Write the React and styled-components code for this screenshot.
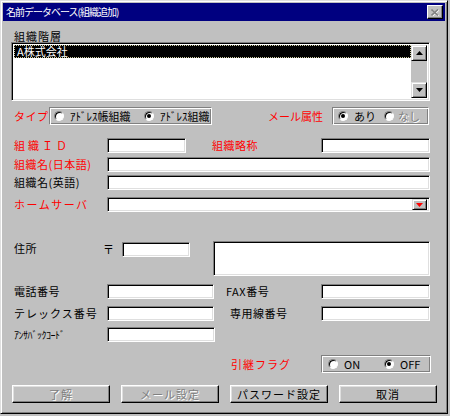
import React from 'react';
import styled, { createGlobalStyle } from 'styled-components';

const Global = createGlobalStyle`
    html, body {
        margin: 0;
        padding: 0;
        background: #c0c0c0;
    }
    body {
        font-family: "Noto Sans CJK JP", "Noto Sans", sans-serif;
        font-size: 11px;
        color: #000;
    }
`
const Window = styled.div`
    box-sizing: border-box;
    width: 448px;
    height: 414px;
    padding: 2px;
    background: #c0c0c0;
    border: 1px solid;
    border-color: #dfdfdf #000 #000 #dfdfdf;
    box-shadow: inset 1px 1px #fff, inset -1px -1px #808080;
    display: flex;
    flex-direction: column;
`
const TitleBar = styled.div`
    height: 18px;
    background: #000080;
    color: #fff;
    display: flex;
    align-items: center;
    padding: 0 2px 0 3px;
    font-size: 10px;
`
const TitleText = styled.span`
    flex: 1;
    line-height: 18px;
    letter-spacing: -1px;
`
const CloseBtn = styled.div`
    box-sizing: border-box;
    width: 16px;
    height: 14px;
    background: #c0c0c0;
    border: 1px solid;
    border-color: #fff #000 #000 #fff;
    box-shadow: inset -1px -1px #808080;
    display: flex;
    align-items: center;
    justify-content: center;
`
const Body = styled.div`
    display: flex;
    flex-direction: column;
    padding: 0 5px 0 8px;
`
const ListLabel = styled.div`
    padding: 10px 0 0 3px;
    height: 11px;
    line-height: 11px;
    letter-spacing: 1px;
`
const ListBox = styled.div`
    box-sizing: border-box;
    width: 419px;
    height: 59px;
    background: #fff;
    border: 1px solid;
    border-color: #808080 #fff #fff #808080;
    box-shadow: inset 1px 1px #000, inset -1px -1px #dfdfdf;
    padding: 2px;
    display: flex;
`
const ListItems = styled.div`
    flex: 1;
`
const ListItem = styled.div`
    box-sizing: border-box;
    height: 13px;
    line-height: 11px;
    background: #000;
    color: #fff;
    border: 1px dotted #c8c8a0;
    padding-left: 2px;
    font-size: 11px;
`
const ScrollBar = styled.div`
    width: 16px;
    display: flex;
    flex-direction: column;
    background: #c0c0c0;
`
const ScrollBtn = styled.div`
    box-sizing: border-box;
    width: 16px;
    height: 16px;
    background: #c0c0c0;
    border: 1px solid;
    border-color: #dfdfdf #000 #000 #dfdfdf;
    box-shadow: inset 1px 1px #fff, inset -1px -1px #808080;
    display: flex;
    align-items: center;
    justify-content: center;
`
const Track = styled.div`
    flex: 1;
    background: #c0c0c0;
`
const Row = styled.div`
    display: flex;
    align-items: ${p => p.$align || 'center'};
    height: ${p => p.$h || 15}px;
    margin-top: ${p => p.$mt || 0}px;
`
const Label = styled.span`
    box-sizing: border-box;
    width: ${p => p.$w}px;
    margin-left: ${p => p.$ml || 0}px;
    padding-left: ${p => p.$pl ?? 3}px;
    color: ${p => (p.$red ? '#ff0000' : '#000')};
    font-size: ${p => p.$fs || 11}px;
    letter-spacing: ${p => p.$ls ?? 0.5}px;
    white-space: nowrap;
    line-height: 15px;
`
const Field = styled.div`
    box-sizing: border-box;
    width: ${p => p.$w}px;
    height: ${p => p.$h || 15}px;
    margin-left: ${p => p.$ml || 0}px;
    margin-top: ${p => p.$mt || 0}px;
    background: #fff;
    border: 1px solid;
    border-color: #808080 #fff #fff #808080;
    box-shadow: inset 1px 1px #000, inset -1px -1px #dfdfdf;
    display: flex;
    justify-content: flex-end;
    align-items: center;
    padding-right: 2px;
`
const DropBtn = styled.div`
    box-sizing: border-box;
    width: 15px;
    height: 11px;
    background: #c0c0c0;
    border: 1px solid;
    border-color: #dfdfdf #000 #000 #dfdfdf;
    box-shadow: inset 1px 1px #fff, inset -1px -1px #808080;
    display: flex;
    align-items: center;
    justify-content: center;
`
const Group = styled.div`
    box-sizing: border-box;
    width: ${p => p.$w}px;
    height: 18px;
    margin-left: ${p => p.$ml || 0}px;
    border: 1px solid;
    border-color: #808080 #fff #fff #808080;
    box-shadow: inset 1px 1px #fff, inset -1px -1px #808080;
    display: flex;
    align-items: center;
    padding-left: ${p => p.$pl || 4}px;
`
const RadioWrap = styled.span`
    display: flex;
    align-items: center;
    width: ${p => (p.$w ? `${p.$w}px` : 'auto')};
    color: ${p => (p.$disabled ? '#808080' : '#000')};
    text-shadow: ${p => (p.$disabled ? '1px 1px #fff' : 'none')};
    font-size: 11px;
    white-space: nowrap;
`
const Circle = styled.span`
    box-sizing: border-box;
    width: 10px;
    height: 10px;
    border-radius: 50%;
    background: #fff;
    border: 1px solid;
    border-color: #808080 #fff #fff #808080;
    box-shadow: inset 1px 1px #000;
    margin-right: ${p => p.$gap || 6}px;
    display: flex;
    align-items: center;
    justify-content: center;
    flex-shrink: 0;

    &::after {
        content: '';
        width: 4px;
        height: 4px;
        border-radius: 50%;
        background: ${p => (p.$on ? '#000' : 'transparent')};
    }
`
const Postal = styled.span`
    width: 19px;
    font-size: 11px;
    line-height: 15px;
    align-self: flex-start;
    margin-top: 1px;
`
const ButtonRow = styled.div`
    display: flex;
    gap: 11px;
    margin-top: 12px;
    padding-left: 1px;
`
const Button = styled.div`
    box-sizing: border-box;
    width: 98px;
    height: 18px;
    background: #c0c0c0;
    border: 1px solid;
    border-color: #fff #000 #000 #fff;
    box-shadow: inset -1px -1px #808080, inset 1px 1px #dfdfdf;
    display: flex;
    align-items: center;
    justify-content: center;
    font-size: 11px;
    letter-spacing: 1px;
    color: ${p => (p.$disabled ? '#808080' : '#000')};
    text-shadow: ${p => (p.$disabled ? '1px 1px #fff' : 'none')};
`

function Radio({ on, disabled, w, gap, children }) {
    return (
        <RadioWrap $w={w} $disabled={disabled}>
            <Circle $on={on} $gap={gap} />
            {children}
        </RadioWrap>
    )
}

const Arrow = ({ up, color = '#000' }) => (
    <svg width="7" height="4" viewBox="0 0 7 4">
        <polygon points={up ? '3.5,0 7,4 0,4' : '0,0 7,0 3.5,4'} fill={color} />
    </svg>
)

export default function App() {
    return (
        <>
            <Global />
            <Window>
                <TitleBar>
                    <TitleText>名前データベース(組織追加)</TitleText>
                    <CloseBtn>
                        <svg width="8" height="7" viewBox="0 0 8 7">
                            <path d="M0.5 0.5 L7 6.5 M7 0.5 L0.5 6.5" stroke="#fff" strokeWidth="1.6" transform="translate(0.6 0.6)" />
                            <path d="M0.5 0.5 L7 6.5 M7 0.5 L0.5 6.5" stroke="#808080" strokeWidth="1.6" />
                        </svg>
                    </CloseBtn>
                </TitleBar>
                <Body>
                    <ListLabel>組織階層</ListLabel>
                    <ListBox>
                        <ListItems>
                            <ListItem>A株式会社</ListItem>
                        </ListItems>
                        <ScrollBar>
                            <ScrollBtn><Arrow up /></ScrollBtn>
                            <Track />
                            <ScrollBtn><Arrow /></ScrollBtn>
                        </ScrollBar>
                    </ListBox>

                    <Row $h={18} $mt={6}>
                        <Label $w={38} $red $ls={0.5}>タイプ</Label>
                        <Group $w={163} $pl={4}>
                            <Radio w={90}>ｱﾄﾞﾚｽ帳組織</Radio>
                            <Radio on>ｱﾄﾞﾚｽ組織</Radio>
                        </Group>
                        <Label $w={64} $ml={56} $red $pl={0} $ls={0}>メール属性</Label>
                        <Group $w={97} $pl={5}>
                            <Radio on w={46}>あり</Radio>
                            <Radio disabled gap={4}>なし</Radio>
                        </Group>
                    </Row>

                    <Row $mt={13}>
                        <Label $w={96} $red $ls={3}>組織ＩＤ</Label>
                        <Field $w={79} />
                        <Label $w={109} $ml={26} $red $pl={0}>組織略称</Label>
                        <Field $w={109} />
                    </Row>
                    <Row $mt={4}>
                        <Label $w={96} $red>組織名(日本語)</Label>
                        <Field $w={323} />
                    </Row>
                    <Row $mt={3}>
                        <Label $w={96}>組織名(英語)</Label>
                        <Field $w={323} />
                    </Row>
                    <Row $mt={7}>
                        <Label $w={96} $red $ls={1.5}>ホームサーバ</Label>
                        <Field $w={323}>
                            <DropBtn><Arrow color="#ff0000" /></DropBtn>
                        </Field>
                    </Row>

                    <Row $mt={29} $h={35} $align="flex-start">
                        <Label $w={92}>住所</Label>
                        <Postal>〒</Postal>
                        <Field $w={68} $mt={1} />
                        <Field $w={217} $h={35} $ml={23} />
                    </Row>

                    <Row $mt={8}>
                        <Label $w={96}>電話番号</Label>
                        <Field $w={107} />
                        <Label $w={95} $ml={12} $pl={0}>FAX番号</Label>
                        <Field $w={109} />
                    </Row>
                    <Row $mt={7}>
                        <Label $w={96} $ls={1}>テレックス番号</Label>
                        <Field $w={107} />
                        <Label $w={91} $ml={16} $pl={0}>専用線番号</Label>
                        <Field $w={109} />
                    </Row>
                    <Row $mt={6}>
                        <Label $w={96} $fs={10} $ls={-0.5}>ｱﾝｻﾊﾞｯｸｺｰﾄﾞ</Label>
                        <Field $w={108} />
                    </Row>

                    <Row $mt={13} $h={18}>
                        <Label $w={90} $ml={220} $red $pl={0} $ls={1}>引継フラグ</Label>
                        <Group $w={110} $pl={6}>
                            <Radio w={56}>ON</Radio>
                            <Radio on>OFF</Radio>
                        </Group>
                    </Row>

                    <ButtonRow>
                        <Button $disabled>了解</Button>
                        <Button $disabled>メール設定</Button>
                        <Button>パスワード設定</Button>
                        <Button>取消</Button>
                    </ButtonRow>
                </Body>
            </Window>
        </>
    )
}
